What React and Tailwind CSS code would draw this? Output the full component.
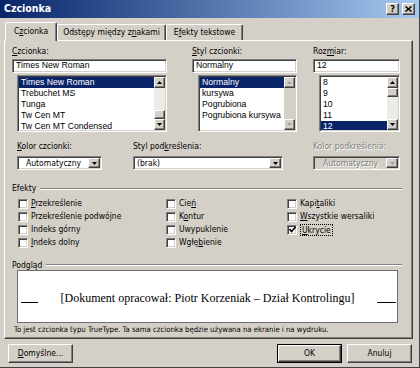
import React from 'react';

const ui = "font-['DejaVu_Sans_Condensed','DejaVu_Sans','Liberation_Sans',sans-serif]";
const fieldFont = "font-['Liberation_Sans',Arial,sans-serif] text-[8.7px]";
const sunken =
  'border border-t-[#808080] border-l-[#808080] border-b-white border-r-white shadow-[inset_1px_1px_0_#404040,inset_-1px_-1px_0_#d4d0c8]';
const raised =
  'border border-t-white border-l-white border-b-[#404040] border-r-[#404040] shadow-[inset_-1px_-1px_0_#808080]';
const greyText = 'text-[#808080] [text-shadow:1px_1px_0_#fff]';

function Tri({ up, grey }) {
  return (
    <svg width="5" height="3" viewBox="0 0 5 3">
      <polygon points={up ? '0,3 5,3 2.5,0' : '0,0 5,0 2.5,3'} fill={grey ? '#a0a0a0' : '#000'} />
    </svg>
  );
}

function ArrowBtn({ up, grey }) {
  return (
    <div className={`flex h-[11px] w-[11px] items-center justify-center bg-[#d4d0c8] ${raised}`}>
      <Tri up={up} grey={grey} />
    </div>
  );
}

function ScrollBar({ thumb, disabled }) {
  return (
    <div className="flex w-[11px] flex-col">
      <ArrowBtn up grey={disabled} />
      <div
        className={`flex flex-1 flex-col ${disabled ? 'bg-[#d4d0c8]' : 'bg-[#ecebe8]'} ${
          thumb === 'bottom' ? 'justify-end' : 'justify-start'
        }`}
      >
        {thumb && <div className={`h-[9px] bg-[#d4d0c8] ${raised}`} />}
      </div>
      <ArrowBtn grey={disabled} />
    </div>
  );
}

function ListBox({ items, selected, thumb, disabled, className = '' }) {
  return (
    <div className={`flex h-[57px] bg-white p-px ${sunken} ${className}`}>
      <div className={`flex-1 overflow-hidden ${fieldFont}`}>
        {items.map((it) => (
          <div
            key={it}
            className={`h-[11px] truncate pl-[2px] leading-[11px] ${
              it === selected ? 'bg-[#0a246a] text-white' : ''
            }`}
          >
            {it}
          </div>
        ))}
      </div>
      <ScrollBar thumb={thumb} disabled={disabled} />
    </div>
  );
}

function Field({ value, className = '' }) {
  return (
    <div className={`flex h-[14px] items-center bg-white pl-[3px] ${fieldFont} ${sunken} ${className}`}>
      {value}
    </div>
  );
}

function Combo({ value, disabled, center, className = '' }) {
  return (
    <div
      className={`flex h-[14px] p-px ${sunken} ${disabled ? 'bg-[#d4d0c8]' : 'bg-white'} ${className}`}
    >
      <div
        className={`flex flex-1 items-center ${center ? 'justify-center' : 'pl-[2px]'} ${
          disabled ? greyText : ''
        }`}
      >
        {value}
      </div>
      <div className={`flex w-[12px] items-center justify-center bg-[#d4d0c8] ${raised}`}>
        <Tri grey={disabled} />
      </div>
    </div>
  );
}

function Check({ children, checked, focus }) {
  return (
    <div className="flex h-[13px] items-center gap-[3px]">
      <div className={`flex h-[10px] w-[10px] items-center justify-center bg-white ${sunken}`}>
        {checked && (
          <svg width="7" height="7" viewBox="0 0 7 7">
            <polyline points="0.5,3 2.5,5.5 6.5,1" fill="none" stroke="#000" strokeWidth="1.6" />
          </svg>
        )}
      </div>
      <span className={focus ? 'border border-dotted border-black px-px leading-[10px]' : ''}>{children}</span>
    </div>
  );
}

function Button({ children, isDefault, className = '' }) {
  return (
    <div className={`${isDefault ? 'border border-black' : ''} ${className}`}>
      <div className={`flex h-full items-center justify-center bg-[#d4d0c8] ${raised}`}>{children}</div>
    </div>
  );
}

function Sep() {
  return <div className="h-[2px] flex-1 border-t border-b border-t-[#808080] border-b-white" />;
}

export default function App() {
  return (
    <div
      className={`flex h-[368px] w-[420px] flex-col border-r border-b border-r-[#404040] border-b-[#404040] bg-[#d4d0c8] text-[8.5px] text-black ${ui}`}
    >
      {/* Title bar */}
      <div className="flex h-[18px] items-center justify-between bg-gradient-to-r from-[#0a246a] to-[#a6caf0] pl-[4px] pr-[4px]">
        <span className="text-[10.5px] font-bold text-white">Czcionka</span>
        <div className="flex gap-[3px]">
          <div className={`flex h-[12px] w-[13px] items-center justify-center bg-[#d4d0c8] text-[9px] font-bold leading-none ${raised}`}>
            ?
          </div>
          <div className={`flex h-[12px] w-[13px] items-center justify-center bg-[#d4d0c8] ${raised}`}>
            <svg width="7" height="6" viewBox="0 0 7 6">
              <path d="M0.5 0.5 L6.5 5.5 M6.5 0.5 L0.5 5.5" stroke="#000" strokeWidth="1.5" />
            </svg>
          </div>
        </div>
      </div>

      {/* Tabs */}
      <div className="flex h-[22px] items-end pl-[5px]">
        <div className="relative z-10 -mb-px flex h-[19px] w-[52px] items-center justify-center rounded-t-[2px] border border-b-0 border-l-white border-t-white border-r-[#404040] bg-[#d4d0c8] pb-[2px] shadow-[inset_-1px_0_0_#808080]">
          C<u>z</u>cionka
        </div>
        <div className="flex h-[16px] w-[109px] items-center justify-center rounded-t-[2px] border border-b-0 border-l-white border-t-white border-r-[#404040] shadow-[inset_-1px_0_0_#808080]">
          Odstępy między z<u>n</u>akami
        </div>
        <div className="flex h-[16px] w-[77px] items-center justify-center rounded-t-[2px] border border-b-0 border-l-white border-t-white border-r-[#404040] shadow-[inset_-1px_0_0_#808080]">
          E<u>f</u>ekty tekstowe
        </div>
      </div>

      {/* Panel */}
      <div className="ml-[4px] h-[299px] w-[409px] pt-[5px] border border-t-white border-l-white border-b-[#404040] border-r-[#404040] shadow-[inset_-1px_-1px_0_#808080]">
        {/* Font / style / size */}
        <div className="flex">
          <div className="ml-[7px] flex w-[155px] flex-col">
            <div className="h-[11px] leading-[11px]">
              <u>C</u>zcionka:
            </div>
            <Field value="Times New Roman" className="mt-[2px]" />
            <ListBox
              className="ml-[5px] mt-[2px]"
              items={['Times New Roman', 'Trebuchet MS', 'Tunga', 'Tw Cen MT', 'Tw Cen MT Condensed']}
              selected="Times New Roman"
              thumb="bottom"
            />
          </div>
          <div className="ml-[25px] flex w-[105px] flex-col">
            <div className="h-[11px] leading-[11px]">
              <u>S</u>tyl czcionki:
            </div>
            <Field value="Normalny" className="mt-[2px]" />
            <ListBox
              className="ml-[6px] mt-[2px]"
              items={['Normalny', 'kursywa', 'Pogrubiona', 'Pogrubiona kursywa']}
              selected="Normalny"
              disabled
            />
          </div>
          <div className="ml-[16px] flex w-[87px] flex-col">
            <div className="h-[11px] leading-[11px]">
              Roz<u>m</u>iar:
            </div>
            <Field value="12" className="mt-[2px]" />
            <ListBox
              className="ml-[6px] mt-[2px]"
              items={['8', '9', '10', '11', '12']}
              selected="12"
              thumb="top"
            />
          </div>
        </div>

        {/* Colour / underline */}
        <div className="mt-[9px] flex">
          <div className="ml-[12px] flex w-[85px] flex-col">
            <div className="h-[11px] leading-[11px]">
              <u>K</u>olor czcionki:
            </div>
            <Combo value="Automatyczny" center className="mt-[4px]" />
          </div>
          <div className="ml-[31px] flex w-[150px] flex-col">
            <div className="h-[11px] leading-[11px]">
              Styl pod<u>k</u>reślenia:
            </div>
            <Combo value="(brak)" className="mt-[4px]" />
          </div>
          <div className="ml-[30px] flex w-[87px] flex-col">
            <div className={`h-[11px] leading-[11px] ${greyText}`}>Kolor podkreślenia:</div>
            <Combo value="Automatyczny" center disabled className="mt-[4px]" />
          </div>
        </div>

        {/* Effects */}
        <div className="ml-[7px] mt-[13px] flex h-[11px] w-[390px] items-center gap-[4px]">
          <span className="leading-[11px]">Efekty</span>
          <Sep />
        </div>
        <div className="mt-[3px] flex">
          <div className="ml-[13px] flex w-[148px] flex-col">
            <Check>
              <u>P</u>rzekreślenie
            </Check>
            <Check>Przekreślenie podwójne</Check>
            <Check>Indeks górny</Check>
            <Check>
              <u>I</u>ndeks dolny
            </Check>
          </div>
          <div className="flex w-[121px] flex-col">
            <Check>
              Cie<u>ń</u>
            </Check>
            <Check>
              K<u>o</u>ntur
            </Check>
            <Check>Uwypuklenie</Check>
            <Check>
              Wgłę<u>b</u>ienie
            </Check>
          </div>
          <div className="flex flex-col">
            <Check>
              Kapi<u>t</u>aliki
            </Check>
            <Check>
              <u>W</u>szystkie wersaliki
            </Check>
            <Check checked focus>
              <u>U</u>krycie
            </Check>
          </div>
        </div>

        {/* Preview */}
        <div className="ml-[7px] mt-[11px] flex h-[10px] w-[390px] items-center gap-[4px]">
          <span className="leading-[10px]">Podgląd</span>
          <Sep />
        </div>
        <div className="ml-[12px] flex h-[53px] w-[381px] items-center border border-[#6e6e6e] bg-white">
          <div className="ml-[3px] mt-[11px] h-px w-[17px] bg-black" />
          <div className="flex-1 pt-[2px] text-center font-['Liberation_Serif',serif] text-[12px] text-black">
            [Dokument opracował: Piotr Korzeniak – Dział Kontrolingu]
          </div>
          <div className="mr-[1px] mt-[11px] h-px w-[19px] bg-black" />
        </div>
        <div className="ml-[9px] mt-px h-[11px] text-[7.7px] leading-[11px]">
          To jest czcionka typu TrueType. Ta sama czcionka będzie używana na ekranie i na wydruku.
        </div>
      </div>

      {/* Buttons */}
      <div className="mt-[5px] flex h-[19px]">
        <Button className="ml-[8px] w-[65px]">
          <span>
            <u>D</u>omyślne...
          </span>
        </Button>
        <Button isDefault className="ml-[204px] w-[65px]">
          OK
        </Button>
        <Button className="ml-[5px] w-[65px]">Anuluj</Button>
      </div>
    </div>
  );
}
